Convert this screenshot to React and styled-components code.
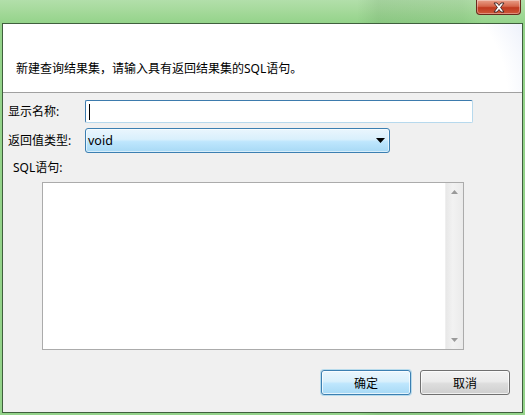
import React from 'react'
import styled, { createGlobalStyle } from 'styled-components'

const GlobalStyle = createGlobalStyle`
  html, body {
    margin: 0;
    padding: 0;
  }
  body {
    font-family: "Noto Sans", "Noto Sans CJK SC", sans-serif;
    font-size: 12px;
    color: #000;
  }
`

// the aero glass around the dialog
const Frame = styled.div`
  width: 525px;
  height: 415px;
  box-sizing: border-box;
  padding: 0 2px 2px 2px;
  display: flex;
  flex-direction: column;
  background:
    linear-gradient(90deg, rgba(255, 255, 255, 0) 0%, rgba(255, 255, 255, 0) 68%, rgba(60, 110, 60, 0.12) 72%, rgba(60, 110, 60, 0.08) 88%, rgba(255, 255, 255, 0) 92%),
    linear-gradient(180deg, #b2dfaa 0px, #a6da9c 10px, #94d38a 23px, #94d38a 100%);
`

const TitleBar = styled.div`
  height: 23px;
  display: flex;
  justify-content: flex-end;
  align-items: flex-start;
  padding-right: 2px;
`

const CloseButton = styled.div`
  width: 43px;
  height: 14px;
  display: flex;
  align-items: center;
  justify-content: center;
  border: 1px solid #6a2a1c;
  border-top: none;
  border-radius: 0 0 4px 4px;
  background: linear-gradient(180deg, #e9a08a 0%, #d5664b 45%, #c0391f 55%, #cf5a3a 100%);
  box-shadow: inset 0 0 0 1px rgba(255, 255, 255, 0.35);
`

const Window = styled.div`
  flex: 1;
  display: flex;
  flex-direction: column;
  border: 1px solid #3f5f3d;
  background: #f0f0f0;
`

const Header = styled.div`
  height: 69px;
  box-sizing: border-box;
  padding: 37px 0 0 13px;
  line-height: 16px;
  border-bottom: 1px solid #a0a0a0;
  background: radial-gradient(ellipse 600px 260px at 0% 100%, #ffffff 84%, #eef2fb 90%, #dae3f5 100%);
`

const Body = styled.div`
  flex: 1;
  display: flex;
  flex-direction: column;
  padding: 7px 12px 0 5px;
`

const FieldGrid = styled.div`
  display: grid;
  grid-template-columns: 77px auto;
  grid-template-rows: 23px 25px;
  row-gap: 5px;
  align-items: center;
`

const Label = styled.div`
  line-height: 16px;
  white-space: nowrap;
  padding-left: ${props => props.indent || 0}px;
`

const TextBox = styled.div`
  width: 388px;
  height: 23px;
  box-sizing: border-box;
  display: flex;
  align-items: center;
  padding-left: 3px;
  background: #fff;
  border: 1px solid;
  border-color: #3d7bad #b7d9ed #b7d9ed #3d7bad;
  border-radius: 2px;
`

const Caret = styled.span`
  width: 1px;
  height: 16px;
  background: #000;
`

const Select = styled.div`
  width: 305px;
  height: 25px;
  box-sizing: border-box;
  display: flex;
  align-items: center;
  justify-content: space-between;
  padding: 0 4px 0 2px;
  border: 1px solid #3c7fb1;
  border-radius: 3px;
  background: linear-gradient(180deg, #eaf6fd 0%, #d9f0fc 45%, #bee6fd 55%, #a7d9f5 100%);
  box-shadow: inset 0 0 0 1px rgba(255, 255, 255, 0.55);
  font-size: 12.5px;
`

const SqlLabel = styled(Label)`
  margin-top: 7px;
`

const TextArea = styled.div`
  width: 422px;
  height: 168px;
  box-sizing: border-box;
  margin: 6px 0 0 34px;
  display: flex;
  border: 1px solid #ababab;
  background: #fff;
`

const TextContent = styled.div`
  flex: 1;
`

const ScrollBar = styled.div`
  width: 17px;
  display: flex;
  flex-direction: column;
  justify-content: space-between;
  align-items: center;
  padding: 7px 0 7px;
  background: linear-gradient(90deg, #e8e8e8 0%, #f2f2f2 40%, #eaeaea 100%);
  border-left: 1px solid #efefef;
`

const ButtonRow = styled.div`
  display: flex;
  justify-content: flex-end;
  gap: 9px;
  margin-top: 20px;
`

const Button = styled.div`
  width: 90px;
  height: 25px;
  box-sizing: border-box;
  display: flex;
  align-items: center;
  justify-content: center;
  border-radius: 3px;
  border: 1px solid ${props => (props.primary ? '#3c7fb1' : '#707070')};
  background: ${props =>
    props.primary
      ? 'linear-gradient(180deg, #eaf6fd 0%, #d9f0fc 45%, #bee6fd 55%, #a7d9f5 100%)'
      : 'linear-gradient(180deg, #f2f2f2 0%, #ebebeb 45%, #dddddd 55%, #cfcfcf 100%)'};
  box-shadow: inset 0 0 0 1px rgba(255, 255, 255, 0.7)
    ${props => (props.primary ? ', 0 0 0 1px rgba(80, 180, 230, 0.35)' : '')};
`

const CloseIcon = () => (
  <svg width="14" height="11" viewBox="0 0 14 11">
    <path
      d="M2 1 L5 1 L7 3.5 L9 1 L12 1 L8.6 5.5 L12 10 L9 10 L7 7.5 L5 10 L2 10 L5.4 5.5 Z"
      fill="#ffffff"
      stroke="#3a2020"
      strokeWidth="0.9"
      strokeLinejoin="round"
    />
  </svg>
)

const DropArrow = () => (
  <svg width="9" height="5" viewBox="0 0 9 5">
    <path d="M0 0 H9 L4.5 5 Z" fill="#000" />
  </svg>
)

const ScrollArrow = ({ down }) => (
  <svg width="7" height="4" viewBox="0 0 7 4">
    <path d={down ? 'M0 0 H7 L3.5 4 Z' : 'M0 4 H7 L3.5 0 Z'} fill="#9a9a9a" />
  </svg>
)

export default function App() {
  return (
    <>
      <GlobalStyle />
      <Frame>
        <TitleBar>
          <CloseButton>
            <CloseIcon />
          </CloseButton>
        </TitleBar>
        <Window>
          <Header>新建查询结果集，请输入具有返回结果集的SQL语句。</Header>
          <Body>
            <FieldGrid>
              <Label>显示名称:</Label>
              <TextBox>
                <Caret />
              </TextBox>
              <Label>返回值类型:</Label>
              <Select>
                <span>void</span>
                <DropArrow />
              </Select>
            </FieldGrid>
            <SqlLabel indent={5}>SQL语句:</SqlLabel>
            <TextArea>
              <TextContent />
              <ScrollBar>
                <ScrollArrow />
                <ScrollArrow down />
              </ScrollBar>
            </TextArea>
            <ButtonRow>
              <Button primary>确定</Button>
              <Button>取消</Button>
            </ButtonRow>
          </Body>
        </Window>
      </Frame>
    </>
  )
}
